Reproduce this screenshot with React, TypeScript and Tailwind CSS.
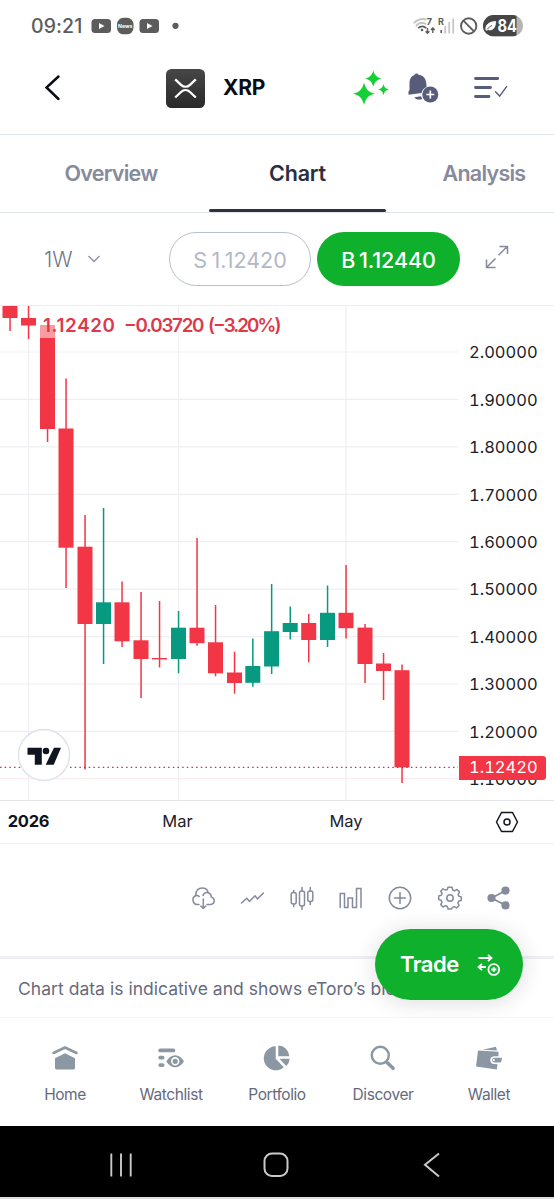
import React from "react";

type Candle = {
  x: number;
  high: number;
  top: number;
  bottom: number;
  low: number;
  up?: boolean;
};

const RED = "#f23645";
const GREEN = "#089981";

const candles: Candle[] = [
  { x: 10, high: 306, top: 306, bottom: 318, low: 331 },
  { x: 28.5, high: 306, top: 318, bottom: 325.5, low: 339 },
  { x: 47.5, high: 325, top: 325, bottom: 429, low: 442 },
  { x: 66, high: 378.5, top: 428.5, bottom: 547.7, low: 588 },
  { x: 85, high: 515, top: 546.7, bottom: 624, low: 769.5 },
  { x: 103.5, high: 508, top: 602.3, bottom: 624, low: 664, up: true },
  { x: 122, high: 581.5, top: 602.3, bottom: 641.3, low: 647 },
  { x: 141, high: 592, top: 640.3, bottom: 659, low: 698 },
  { x: 159.5, high: 601, top: 658, bottom: 659.4, low: 667.5 },
  { x: 178.5, high: 611, top: 627.7, bottom: 659, low: 673.3, up: true },
  { x: 197, high: 538, top: 627.7, bottom: 643.2, low: 645.7 },
  { x: 215.5, high: 605, top: 642.3, bottom: 673.3, low: 676.3 },
  { x: 234.5, high: 651.7, top: 672.5, bottom: 683, low: 693.7 },
  { x: 252.8, high: 638.5, top: 666, bottom: 682.8, low: 686.7, up: true },
  { x: 271.6, high: 584, top: 631.2, bottom: 666.5, low: 674, up: true },
  { x: 290.2, high: 606.5, top: 623, bottom: 632, low: 639.5, up: true },
  { x: 308.7, high: 614, top: 623, bottom: 640, low: 662.3 },
  { x: 327.5, high: 585.5, top: 612.8, bottom: 640, low: 647, up: true },
  { x: 346, high: 565, top: 612.8, bottom: 628.2, low: 638.5 },
  { x: 365, high: 624, top: 627.6, bottom: 664, low: 683 },
  { x: 383.5, high: 653, top: 663.5, bottom: 671, low: 700 },
  { x: 402, high: 664.5, top: 670.2, bottom: 767.3, low: 783 },
];

const gridRows = [352, 399.4, 446.9, 494.3, 541.7, 589.2, 636.6, 684, 731.4];
const prices = ["2.00000", "1.90000", "1.80000", "1.70000", "1.60000", "1.50000", "1.40000", "1.30000", "1.20000", "1.10000"];

function StatusBar() {
  return (
    <div className="flex h-[52px] items-center pl-[31px] text-[#5c5c5c]">
      <span className="w-[60px] pt-[2px] text-[19.5px] font-medium leading-none tracking-[0.1px]">09:21</span>
      <svg width="90" height="20" viewBox="0 0 90 20">
        <rect x="0.5" y="3" width="19.5" height="14" rx="3.5" fill="#5c5c5c" />
        <path d="M8 7v6l5.5-3z" fill="#fff" />
        <rect x="26" y="1.8" width="16.5" height="16.5" rx="6.5" fill="#5c5c5c" />
        <text x="34.2" y="12.2" textAnchor="middle" fontSize="5.2" fontWeight="700" fill="#fff">News</text>
        <rect x="48.5" y="3" width="19.5" height="14" rx="3.5" fill="#5c5c5c" />
        <path d="M56 7v6l5.5-3z" fill="#fff" />
        <circle cx="84.5" cy="9.8" r="3.1" fill="#5c5c5c" />
      </svg>
      <svg className="ml-[232px]" width="111" height="24" viewBox="413 14 111 24">
        <g fill="none" strokeLinecap="butt">
          <path d="M413.8 23.2c4.2-4.4 9.400-5.1 12.400-3.2" stroke="#c4c4c4" strokeWidth="1.9" />
          <path d="M415.8 26.2c3.3-3.6 7.300-4 10.300-2" stroke="#c4c4c4" strokeWidth="1.9" />
          <path d="M418.2 28.2c2.5-2.4 5.9-2.3 8 0" stroke="#5c5c5c" strokeWidth="1.7" />
        </g>
        <circle cx="422" cy="30" r="1.3" fill="#5c5c5c" />
        <text x="426.6" y="25.2" fontSize="9.5" fontWeight="700" fill="#5c5c5c">7</text>
        <path d="M427.5 28v5M425.6 31.3l1.9 1.9 1.9-1.9M432.8 33v-5M430.9 29.9l1.9-1.9 1.9 1.9" stroke="#5c5c5c" strokeWidth="1.4" fill="none" />
        <text x="438" y="25" fontSize="9" fontWeight="700" fill="#5c5c5c">R</text>
        <path d="M441.2 30v3" stroke="#5c5c5c" strokeWidth="1.6" />
        <path d="M445.2 26v7.5M449.2 22v11.5M453.2 18.5v15" stroke="#c4c4c4" strokeWidth="1.7" />
        <circle cx="468.7" cy="26" r="7.7" fill="none" stroke="#5c5c5c" strokeWidth="1.9" />
        <path d="M463.4 20.6l10.6 10.8" stroke="#5c5c5c" strokeWidth="1.9" />
        <clipPath id="battery"><rect x="483" y="15" width="40" height="21.5" rx="10.7" /></clipPath>
        <g clipPath="url(#battery)">
          <rect x="483" y="15" width="40" height="21.5" fill="#b5b5b5" />
          <rect x="483" y="15" width="33.5" height="21.5" fill="#464646" />
        </g>
        <path d="M486 30.2c-1-5.2 2.7-8.3 9.7-8.8-.2 6.5-3 9-7 8.400l3.600-4.400-4.600 4.600z" fill="#fff" stroke="#fff" strokeWidth=".8" />
        <path d="M487 29.500c1.500-2 3-3 5-4" stroke="#464646" strokeWidth=".9" fill="none" />
        <text x="497.500" y="32.300" fontSize="17.500" fontWeight="700" fill="#fff" textLength="19.500" lengthAdjust="spacingAndGlyphs">84</text>
      </svg>
    </div>
  );
}

function Header() {
  return (
    <header className="flex h-[83px] items-start border-b border-[#dbe5ee] pl-[44px]">
      <svg className="mt-[22px]" width="18" height="28" viewBox="0 0 18 28">
        <path d="M14.500 2.500L2.500 13.500L14.500 25" fill="none" stroke="#0b0d14" strokeWidth="2.500" strokeLinecap="round" />
      </svg>
      <svg className="ml-[104px] mt-[17px]" width="39" height="39" viewBox="0 0 39 39">
        <defs>
          <linearGradient id="coin" x1="0" y1="0" x2="0" y2="1">
            <stop offset="0" stopColor="#474747" />
            <stop offset="1" stopColor="#292929" />
          </linearGradient>
        </defs>
        <rect width="39" height="39" rx="5.500" fill="url(#coin)" />
        <path d="M9.200 10.300L15 15.800c2.600 2.500 6.400 2.500 9 0l5.800-5.500M9.200 28.500L15 23c2.600-2.500 6.400-2.500 9 0l5.800 5.500" fill="none" stroke="#fff" strokeWidth="2.300" />
      </svg>
      <span className="ml-[18px] mt-[24px] w-[44px] text-[21px] font-bold leading-[24px] tracking-[-0.3px] text-[#0b0d14]">XRP</span>
      <svg className="ml-[85px] mt-[17px]" width="38" height="38" viewBox="352 69 38 38">
        <g fill="#13d035">
          <path d="M373.300 70.500c1.500 5 3.200 6.600 8.200 8.100-5 1.500-6.700 3.100-8.200 8.100-1.500-5-3.200-6.600-8.200-8.100 5-1.500 6.700-3.100 8.200-8.100z" />
          <path d="M364 82.500c2 7 4 9.300 10.800 11.300-6.800 2-8.800 4.200-10.800 11.200-2-7-4-9.200-10.800-11.200 6.800-2 8.800-4.300 10.800-11.300z" />
          <path d="M383.500 84c1 3.500 2 4.600 5.400 5.600-3.400 1-4.400 2.100-5.400 5.600-1-3.500-2-4.600-5.400-5.600 3.400-1 4.400-2.100 5.400-5.600z" />
        </g>
      </svg>
      <svg className="ml-[17px] mt-[19px]" width="32" height="34" viewBox="407 71 32 34">
        <g fill="#575c7b">
          <path d="M408.500 94.800v-3.600l1-1v-6.500c0-5 2-7.800 5-8.700.3-2 3.400-2 3.900-.3 4 .2 7.300 3.200 7.800 7.800l.4 4.500c-3 1.300-4.500 3.200-5 6z" />
          <path d="M414.500 97.200l6.600-.9c.2 1.200.8 2 1.200 2.700-3 1.200-7 .6-7.800-1.800z" />
          <circle cx="430.300" cy="94.500" r="8" />
        </g>
        <path d="M426.300 94.500h8M430.300 90.500v8" stroke="#fff" strokeWidth="1.700" />
      </svg>
      <svg className="ml-[34px] mt-[22px]" width="36" height="28" viewBox="474 74 36 28">
        <path d="M476.500 78.500h22.200M476.500 87.500h15M476.500 96.500h13.500" stroke="#575c7b" strokeWidth="2.800" strokeLinecap="round" />
        <path d="M496.500 91.800l4.100 4.300 7-9.500" stroke="#575c7b" strokeWidth="1.400" fill="none" strokeLinecap="round" />
      </svg>
    </header>
  );
}

function Tabs() {
  return (
    <nav className="flex h-[78px] border-b border-[#dfe4ea] pl-[18px] text-[21.5px] font-semibold leading-[26px] tracking-[-0.75px] text-[#858a9c]">
      <div className="w-[186px] shrink-0 pt-[25px] text-center">Overview</div>
      <div className="flex w-[187px] shrink-0 flex-col items-center justify-between pt-[25px] text-[#2a2e41]">
        <span className="tracking-[-0.200px]">Chart</span>
        <span className="h-[3px] w-[177px] rounded-full bg-[#2d3242]" />
      </div>
      <div className="w-[186px] shrink-0 pt-[25px] text-center">Analysis</div>
    </nav>
  );
}

function Toolbar() {
  return (
    <div className="flex h-[93px] items-center border-b border-[#edf0f2] pl-[44px]">
      <span className="w-[42px] text-[21px] font-light leading-none text-[#737789]">1W</span>
      <svg width="16" height="10" viewBox="0 0 16 10">
        <path d="M2.500 2l5.500 5.500L13.500 2" fill="none" stroke="#8a8fa0" strokeWidth="1.300" />
      </svg>
      <button className="ml-[67px] h-[54px] w-[142px] rounded-full border-[1.5px] border-[#b9bfcd] pt-[2px] text-[21.500px] tracking-[0px] [word-spacing:-1.500px] text-[#b3b8c8]">S 1.12420</button>
      <button className="ml-[6px] h-[54px] w-[143px] rounded-full bg-[#0fb12c] pt-[2px] text-[21.500px] font-medium tracking-[-0.100px] [word-spacing:-2px] text-white">B 1.12440</button>
      <svg className="ml-[24px] mb-[4px]" width="26" height="26" viewBox="0 0 26 26">
        <path d="M14.500 11.300L23 2.800M15.500 2.500h8v7.500M11.500 14.500L3 23M2.500 15.500v8h9" fill="none" stroke="#858a9b" strokeWidth="1.500" />
      </svg>
    </div>
  );
}

function Plot() {
  return (
    <svg width="458" height="495" viewBox="0 306 458 495">
      <g stroke="#eeeff2" strokeWidth="1.200">
        {gridRows.map((y) => (
          <line key={y} x1="0" x2="458" y1={y} y2={y} />
        ))}
        {[28.5, 178.5, 346].map((x) => (
          <line key={x} x1={x} x2={x} y1="306" y2="801" />
        ))}
      </g>
      <line x1="0" x2="458" y1="778.700" y2="778.700" stroke="#f9e8ec" />
      {candles.map((c) => {
        const color = c.up ? GREEN : RED;
        return (
          <g key={c.x} fill={color}>
            <rect x={c.x - 0.7} y={c.high} width="1.500" height={c.low - c.high} />
            <rect x={c.x - 7.5} y={c.top} width="15" height={c.bottom - c.top} />
          </g>
        );
      })}
      <line x1="0" x2="458" y1="767.400" y2="767.400" stroke="#b83a4b" strokeWidth="1.400" strokeDasharray="1.500 3.170" />
      <rect x="40" y="313" width="242" height="25" fill="#fff" fillOpacity=".5" />
      <text x="43" y="331.500" fontSize="18.800" fontWeight="600" fill="#dc3a4b" textLength="72">1.12420</text>
      <text x="124" y="331.500" fontSize="18.800" fontWeight="600" fill="#dc3a4b" textLength="80.500">−0.03720</text>
      <text x="208" y="331.500" fontSize="18.800" fontWeight="600" fill="#dc3a4b" textLength="73.500">(−3.20%)</text>
      <circle cx="44" cy="755" r="25.500" fill="#fff" stroke="#dfe0ea" strokeWidth="1.300" />
      <path d="M27.500 747.700h14.300v17h-7v-10h-7.300zM54 747.700h7l-7.300 17h-8z" fill="#101420" />
      <circle cx="46" cy="751" r="3.300" fill="#101420" />
    </svg>
  );
}

function Chart() {
  return (
    <section className="relative flex h-[538px] flex-col border-b border-[#eef0f3]">
      <div className="flex h-[495px] border-b-[1.5px] border-[#e1e2ea]">
        <Plot />
        <div className="flex flex-col pl-[11px] pt-[22.300px] text-[16.500px] tabular-nums text-[#1d2028]">
          {prices.map((p) => (
            <span key={p} className="h-[47.430px] leading-[48px]">{p}</span>
          ))}
        </div>
      </div>
      <div className="absolute left-[458.500px] top-[449.500px] flex h-[24px] w-[87.500px] items-center rounded-r-[3px] bg-[#f23645] pl-[10.500px] text-[16.500px] tabular-nums text-white">1.12420</div>
      <div className="flex h-[42px] items-center text-[16.500px] leading-none text-[#1d2028]">
        <span className="w-[57px] pb-[1px] text-center font-bold tracking-[-0.300px] text-[#10131c]">2026</span>
        <span className="ml-[92px] w-[57px] pb-[1px] text-center">Mar</span>
        <span className="ml-[110px] w-[60px] pb-[1px] text-center">May</span>
        <svg className="ml-[118px]" width="26" height="24" viewBox="0 0 26 24">
          <path d="M7.500 2.500h11l5 9.500-5 9.500h-11l-5-9.500z" fill="none" stroke="#14161e" strokeWidth="1.500" strokeLinejoin="round" />
          <circle cx="13" cy="12" r="3" fill="none" stroke="#14161e" strokeWidth="1.500" />
        </svg>
      </div>
    </section>
  );
}

const toolIcons: React.ReactNode[] = [
  <>
    <path d="M8 18.500H6.200a4.700 4.700 0 0 1-1.400-9c-.6-5.300 3-7.500 6.200-7.500 3.500 0 5.700 2 6.300 4.700M12 9.500c.8-2.500 3-3.300 5-2.800 2.300.6 3.300 2.300 3.200 4.200 2 .7 3 2.000 3 3.700 0 2.300-1.600 3.900-4 3.900H16" />
    <path d="M4.800 9.500c1.300-.3 2.500 0 3.400 1M12.300 13v9.500M9.800 20l2.500 2.500 2.500-2.500" />
  </>,
  <path d="M1.500 17l5.300-4.700 2.700 3 5.500-5.500 2.500 3L23.500 7" />,
  <>
    <rect x="1.200" y="6.500" width="5" height="11.500" rx="2" />
    <rect x="9.500" y="5" width="5" height="15" rx="2" />
    <rect x="17.800" y="5" width="5" height="10.500" rx="2" />
    <path d="M3.700 4.500v2M3.700 18v2.500M12 1.500v3.500M12 20v3.500M20.300 1.500V5M20.300 15.500v3" />
  </>,
  <path d="M1.200 21.500V7.500h4.300v14M9 21.500v-9.500h4.500v9.500M17.500 21.500v-19h4.500v19M5.500 21.500h3.500M13.500 21.500h4" />,
  <>
    <circle cx="12" cy="12" r="10.700" />
    <path d="M12 6.500v11M6.500 12h11" />
  </>,
  <>
    <path d="M10 1.300h4l.7 2.700 1.800.8 2.600-1.300L21.500 6l-1.300 2.600.6 1.500 2.500.9v3.300l-2.600 1-.8 1.700 1.200 2.500-2.500 2.400-2.400-1.300-1.800.8L13.500 23h-3.300l-.9-2.600-1.800-.7L5 21 2.700 18.600 4 16.200l-.8-1.900-2.500-.8V10l2.600-.8.8-1.700-1.400-2.300L5 2.800l2.500 1.300L9.300 3.500z" strokeLinejoin="round" />
    <circle cx="12" cy="12" r="3.200" />
  </>,
  <>
    <path d="M4.500 12L19 4.500M4.500 12L19 19.500" strokeWidth="1.800" />
    <g fill="#858a9d" stroke="none">
      <circle cx="4.500" cy="12" r="4.100" />
      <circle cx="18.500" cy="4.600" r="4.100" />
      <circle cx="18.500" cy="19.400" r="4.100" />
    </g>
  </>,
];

function Tools() {
  return (
    <div className="flex h-[115px] items-start border-b-[3px] border-[#efeff5] pl-[178.500px] pt-[42px]">
      {toolIcons.map((icon, i) => (
        <div key={i} className="flex w-[49.300px] justify-center">
          <svg width="24" height="24" viewBox="0 0 24 24" fill="none" stroke="#858a9d" strokeWidth="1.500" strokeLinecap="round">
            {icon}
          </svg>
        </div>
      ))}
    </div>
  );
}

function TradeButton() {
  return (
    <button className="absolute left-[375px] top-[929px] flex h-[71px] w-[148px] items-center rounded-full bg-[#0fb12c] pl-[25px] text-[22px] font-semibold text-white shadow-[0_2px_22px_rgba(40,40,60,0.16)]">
      <span className="w-[77px] text-left tracking-[-0.500px]">Trade</span>
      <svg width="24" height="24" viewBox="0 0 24 24" fill="none" stroke="#fff" strokeWidth="1.800">
        <path d="M1.500 5h12.500M11 1.800L14.500 5 11 8.200M9 14H1.500M5 10.800L1.500 14 5 17.200" />
        <circle cx="16.800" cy="16.500" r="5.400" />
        <path d="M16.800 13.900v5.200M14.200 16.500h5.200" />
      </svg>
    </button>
  );
}

const navItems: { label: string; icon: React.ReactNode }[] = [
  {
    label: "Home",
    icon: (
      <>
        <path d="M2.500 9L14 3.500l11.500 5.500" fill="none" stroke="#8b97a3" strokeWidth="2.600" strokeLinecap="round" strokeLinejoin="round" />
        <path d="M4 14.200L14 9.300l10 4.900v9.800q0 1.400-1.400 1.400H5.400Q4 25.400 4 24z" />
      </>
    ),
  },
  {
    label: "Watchlist",
    icon: (
      <>
        <rect x="1.300" y="4.500" width="17" height="3.800" rx="1.900" />
        <rect x="1.300" y="11.800" width="6.200" height="3.800" rx="1.900" />
        <rect x="1.300" y="19.200" width="6.200" height="3.800" rx="1.900" />
        <path d="M9.300 17.300c4.800-8 13-8 17.700 0-4.700 8-12.900 8-17.700 0z" />
        <circle cx="18.200" cy="17.300" r="3.400" fill="none" stroke="#fff" strokeWidth="1.600" />
      </>
    ),
  },
  {
    label: "Portfolio",
    icon: (
      <>
        <path d="M12.700 2.300v12.500l8.100 8.400A12 12 0 1 1 12.700 2.300z" />
        <path d="M15.300 1.500a11.300 11.300 0 0 1 11 10.800h-11zM16.500 14.700h10.200a11 11 0 0 1-3.500 7.300z" />
      </>
    ),
  },
  {
    label: "Discover",
    icon: (
      <>
        <circle cx="11.300" cy="11.300" r="8.500" fill="none" stroke="#8b97a3" strokeWidth="2.400" />
        <path d="M18.300 18.800l5.800 5.500" stroke="#8b97a3" strokeWidth="3.600" strokeLinecap="round" />
      </>
    ),
  },
  {
    label: "Wallet",
    icon: (
      <>
        <path d="M7.500 5.800L21 2.700l1 3.800z" />
        <path d="M3 6.500l20.500 1.200v4.500h-4.500c-5 .3-5 7.600 0 7.900l3.500.2-.7 5.300L1 22.500z" />
        <path d="M19.500 13.700H27l-.6 3.500q-.2 1.300-1.600 1.300h-5.300c-3.200-.2-3.200-4.800 0-4.800z" />
        <circle cx="18.800" cy="16.200" r="1.100" fill="#fff" />
      </>
    ),
  },
];

function BottomNav() {
  return (
    <nav className="flex h-[108px] bg-white px-3">
      {navItems.map((item) => (
        <div key={item.label} className="flex flex-1 flex-col items-center pt-[26px]">
          <svg width="28" height="28" viewBox="0 0 28 28" fill="#8b97a3">{item.icon}</svg>
          <span className="mt-[12.500px] text-[15.500px] leading-[20px] tracking-[-0.420px] text-[#656a7e]">{item.label}</span>
        </div>
      ))}
    </nav>
  );
}

function SystemNav() {
  return (
    <div className="flex h-[73px] items-start border-b-2 border-[#dedede] bg-black pl-[108px] pt-[26px]">
      <svg width="26" height="26" viewBox="0 0 26 26">
        <path d="M3.300 1.500v23M13 1.500v23M22.700 1.500v23" stroke="#c9c9c9" strokeWidth="1.900" />
      </svg>
      <svg className="ml-[128px]" width="28" height="26" viewBox="0 0 28 26">
        <rect x="2.500" y="1.500" width="23" height="22.500" rx="7.500" fill="none" stroke="#c9c9c9" strokeWidth="2" />
      </svg>
      <svg className="ml-[132px]" width="20" height="26" viewBox="0 0 20 26">
        <path d="M17 1.500L3 12.700 17 24.500" fill="none" stroke="#c9c9c9" strokeWidth="2" />
      </svg>
    </div>
  );
}

export default function App() {
  return (
    <main className="relative flex h-[1200px] w-[554px] flex-col overflow-hidden bg-white font-['Inter',sans-serif]">
      <StatusBar />
      <Header />
      <Tabs />
      <Toolbar />
      <Chart />
      <Tools />
      <p className="h-[59px] whitespace-nowrap border-b border-[#f6f6f8] pl-[18px] pt-[17px] text-[17.500px] leading-[26px] tracking-[0.030px] text-[#666b7e]">
        Chart data is indicative and shows eToro’s bid
      </p>
      <BottomNav />
      <SystemNav />
      <TradeButton />
    </main>
  );
}
